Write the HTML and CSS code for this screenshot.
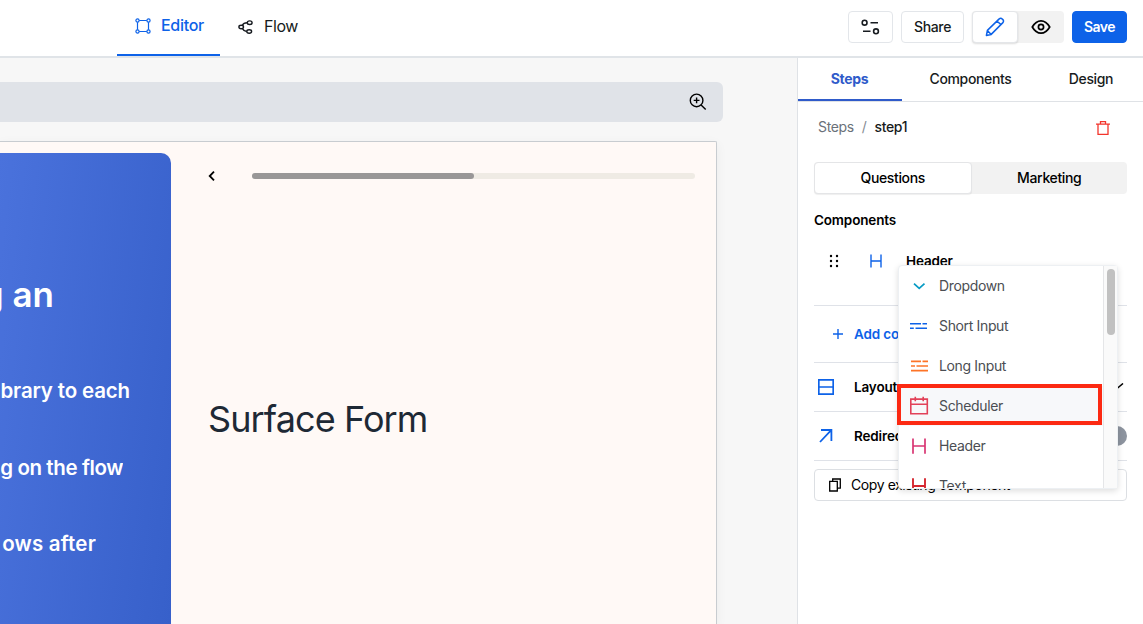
FILE: index.html
```html
<!DOCTYPE html>
<html lang="en">
<head>
<meta charset="utf-8">
<title>Form editor</title>
<link rel="stylesheet" href="styles.css">
</head>
<body>
<header class="topbar">
  <nav class="modes">
    <a class="mode mode-active">
      <svg width="16" height="16" viewBox="0 0 16 16" fill="none" stroke="currentColor" stroke-width="1.2"><path d="M4.2 2.5h7.6M4.2 13.5h7.6M2.5 4.2v7.6M13.5 4.2v7.6"/><circle cx="2.5" cy="2.5" r="1.6"/><circle cx="13.5" cy="2.5" r="1.6"/><circle cx="2.5" cy="13.5" r="1.6"/><circle cx="13.5" cy="13.5" r="1.6"/></svg>
      <span>Editor</span>
    </a>
    <a class="mode">
      <svg width="16" height="16" viewBox="0 0 16 16" fill="none" stroke="currentColor" stroke-width="1.4"><ellipse cx="3.2" cy="8" rx="2.3" ry="1.7"/><ellipse cx="11.7" cy="3.7" rx="2.4" ry="1.8"/><ellipse cx="11.2" cy="12.5" rx="2.4" ry="1.7"/><path d="M4.3 6.3Q5.5 3.8 9.2 3.7M4.5 9.6Q5.8 12.3 8.7 12.5"/></svg>
      <span>Flow</span>
    </a>
  </nav>
  <div class="actions">
    <button class="btn btn-settings"><svg width="20" height="18" viewBox="0 0 20 18" fill="none" stroke="currentColor" stroke-width="1.6"><circle cx="3.6" cy="4.7" r="2.4"/><path d="M9.5 4.7h7.5M2 13.3h7.5"/><circle cx="15" cy="13.3" r="2.4"/></svg></button>
    <button class="btn btn-share">Share</button>
    <div class="view-toggle">
      <button class="view view-active"><svg width="20" height="20" viewBox="0 0 20 20" fill="none" stroke="currentColor" stroke-width="1.5" stroke-linejoin="round"><path d="M1.4 18.4l1-5L14.2 1.9a2.1 2.1 0 0 1 3 0l.7.7a2.1 2.1 0 0 1 0 3L6.2 17.4zM12.1 4l3.8 3.8M2.4 13.4l3.8 4"/></svg></button>
      <button class="view"><svg width="20" height="16" viewBox="0 0 20 16" fill="none" stroke="currentColor" stroke-width="1.7"><path d="M1.3 8Q4.8 1.8 10 1.8T18.7 8Q15.2 14.2 10 14.2T1.3 8z"/><circle cx="10" cy="8" r="2.6"/></svg></button>
    </div>
    <button class="btn btn-save">Save</button>
  </div>
</header>
<div class="workspace">
  <main class="stage">
    <div class="zoombar"><svg width="18" height="18" viewBox="0 0 18 18" fill="none" stroke="currentColor" stroke-width="1.4"><circle cx="7.6" cy="7.4" r="6.3"/><path d="M4.7 7.4h5.8M7.6 4.5v5.8M12.1 12l4.6 4.6"/></svg></div>
    <div class="preview">
      <section class="promo">
        <h2 class="promo-line promo-title">g an</h2>
        <p class="promo-line promo-a">brary to each</p>
        <p class="promo-line promo-b">g on the flow</p>
        <p class="promo-line promo-c">ows after</p>
      </section>
      <section class="form">
        <div class="form-nav">
          <svg width="10" height="12" viewBox="0 0 10 12" fill="none" stroke="currentColor" stroke-width="1.8"><path d="M7 1.6L2.7 6 7 10.4"/></svg>
          <div class="progress"><div class="progress-fill"></div></div>
        </div>
        <h1 class="form-title">Surface Form</h1>
      </section>
    </div>
  </main>
  <aside class="sidebar">
    <nav class="tabs"><a class="tab tab-active">Steps</a><a class="tab tab-mid">Components</a><a class="tab tab-last">Design</a></nav>
    <div class="panel">
      <div class="crumbs">
        <span class="crumb">Steps</span><span class="slash">/</span><span class="current">step1</span>
        <svg class="trash" width="14" height="14" viewBox="0 0 14 14" fill="none" stroke="currentColor" stroke-width="1.3"><path d="M0 3.2h14M4.5 3V.7h5V3M2 3.2v10.1h10V3.2"/></svg>
      </div>
      <div class="segment"><button class="seg seg-active">Questions</button><button class="seg">Marketing</button></div>
      <h3 class="heading">Components</h3>
      <div class="row component-row">
        <svg width="10" height="14" viewBox="0 0 10 14" fill="currentColor"><circle cx="2" cy="2" r="1.2"/><circle cx="8" cy="2" r="1.2"/><circle cx="2" cy="7" r="1.2"/><circle cx="8" cy="7" r="1.2"/><circle cx="2" cy="12" r="1.2"/><circle cx="8" cy="12" r="1.2"/></svg>
        <svg class="blue" width="12" height="14" viewBox="0 0 12 14" fill="none" stroke="currentColor" stroke-width="1.4"><path d="M1 .5v13M11 .5v13M1 7h10"/></svg>
        <span class="label">Header</span>
      </div>
      <div class="row add-row blue">
        <svg width="10" height="10" viewBox="0 0 10 10" fill="none" stroke="currentColor" stroke-width="1.4"><path d="M5 0v10M0 5h10"/></svg>
        <span class="label">Add component</span>
      </div>
      <div class="row option-row">
        <svg class="blue" width="16" height="16" viewBox="0 0 16 16" fill="none" stroke="currentColor" stroke-width="1.7"><path d="M.8.8h14.4v14.4H.8zM.8 8h14.4"/></svg>
        <span class="label">Layout</span>
        <svg class="row-end check" width="12" height="8" viewBox="0 0 12 8" fill="none" stroke="currentColor" stroke-width="1.5"><path d="M1 1.5l4 4 6-5"/></svg>
      </div>
      <div class="row option-row">
        <svg class="blue" width="16" height="14" viewBox="0 0 16 14" fill="none" stroke="currentColor" stroke-width="1.8"><path d="M3 1h10.4v11M13.2 1.2L2 13"/></svg>
        <span class="label">Redirect</span>
        <span class="switch row-end"></span>
      </div>
      <button class="copy"><svg width="12" height="14" viewBox="0 0 12 14" fill="none" stroke="currentColor" stroke-width="1.3"><path d="M3.7 3V1h7.6v9.2H8.7M.7 3.4h7.6V13H.7z"/></svg><span>Copy existing component</span></button>
    </div>
    <div class="menu">
      <ul class="menu-list">
        <li class="item"><svg class="teal" width="20" height="20" viewBox="0 0 20 20" fill="none" stroke="currentColor" stroke-width="1.7"><path d="M5 7.6l5.2 4.8 5.3-4.8"/></svg><span>Dropdown</span></li>
        <li class="item"><svg class="blue" width="20" height="20" viewBox="0 0 20 20" fill="none" stroke="currentColor" stroke-width="1.6"><path d="M1 7.7h11M13.5 7.7h4.5M1 12.3h3.8M6.5 12.3h11.5"/></svg><span>Short Input</span></li>
        <li class="item"><svg class="orange" width="20" height="20" viewBox="0 0 20 20" fill="none" stroke="currentColor" stroke-width="1.6"><path d="M2 5.4h10M13.5 5.4H19M2 10h4M7.5 10H19M2 14.6h17"/></svg><span>Long Input</span></li>
        <li class="item item-active"><svg class="crimson" width="20" height="20" viewBox="0 0 20 20" fill="none" stroke="currentColor" stroke-width="1.6"><path d="M1.8 3.1h16.5v14.6H1.8zM1.8 8.2h16.5M6.3.7v4.5M14.2.7v4.5"/></svg><span>Scheduler</span></li>
        <li class="item"><svg class="pink" width="20" height="20" viewBox="0 0 20 20" fill="none" stroke="currentColor" stroke-width="1.7"><path d="M4 2.5v15.3M16 2.5v15.3M4 10h12"/></svg><span>Header</span></li>
        <li class="item"><svg class="red" width="20" height="20" viewBox="0 0 20 20" fill="none" stroke="currentColor" stroke-width="1.9"><path d="M4 2.2v15M16 2.2v15M4 10h12"/></svg><span>Text</span></li>
      </ul>
      <div class="track"><div class="thumb"></div></div>
      <div class="highlight"></div>
    </div>
  </aside>
</div>
</body>
</html>
```
FILE: styles.css
```css
* { box-sizing: border-box; }
body { margin: 0; width: 1143px; height: 624px; overflow: hidden; display: flex; flex-direction: column; background: #fff; color: #171b20; font-family: Inter, "Liberation Sans", sans-serif; font-size: 14px; letter-spacing: -.35px; }
button { font: inherit; letter-spacing: inherit; color: inherit; padding: 0; margin: 0; border: 0; background: none; display: flex; align-items: center; justify-content: center; }
h1, h2, h3, p, ul { margin: 0; padding: 0; list-style: none; }
svg { display: block; flex: none; }
.blue { color: #0d62e8; }
.topbar { height: 58px; flex: none; display: flex; justify-content: space-between; border-bottom: 2px solid #e0e4e8; padding: 0 16px 0 117px; }
.modes { display: flex; height: 56px; }
.mode { display: flex; align-items: center; gap: 10px; padding: 0 17px 2px 18px; font-size: 16px; letter-spacing: -.45px; }
.mode:last-child { padding-bottom: 4px; }
.mode:last-child svg { margin-top: 2px; }
.mode-active { width: 103px; color: #0d62e8; font-weight: 500; border-bottom: 2px solid #0d62e8; }
.mode-active span { margin-top: -2px; letter-spacing: -.3px; }
.actions { display: flex; gap: 8px; padding-top: 11px; }
.btn { height: 32px; border: 1px solid #e3e6ea; border-radius: 4px; font-weight: 500; padding-bottom: 1px; }
.btn-settings { width: 45px; padding: 0; }
.btn-share { width: 63px; }
.btn-save { width: 55px; background: #0d62e8; border-color: #0d62e8; color: #fff; font-weight: 600; letter-spacing: -.5px; }
.view-toggle { width: 92px; height: 32px; display: flex; background: #f2f2f2; border-radius: 4px; }
.view { width: 46px; color: #000; }
.view-active { background: #fff; border: 1px solid #e4e6e9; border-radius: 4px; color: #0d62e8; box-shadow: 0 1px 2px #0002; }
.workspace { flex: 1; min-height: 0; display: flex; }
.stage { width: 797px; background: #f7f7f7; padding-top: 24px; display: flex; flex-direction: column; overflow: hidden; }
.zoombar { width: 723px; height: 40px; flex: none; border-radius: 0 6px 6px 0; background: #e0e3e8; display: flex; align-items: center; justify-content: flex-end; padding-right: 16px; color: #000; }
.preview { width: 717px; flex: 1; margin-top: 19px; border: solid #c8ccd0; border-width: 1px 1px 0 0; border-radius: 0 2px 0 0; background: #fff9f6; box-shadow: 0 3px 12px #0000000d; display: flex; padding-top: 11px; }
.promo { width: 171px; flex: none; overflow: hidden; border-radius: 0 10px 0 0; background: linear-gradient(97deg, #4a72dc, #3760ca); color: #fff; display: flex; flex-direction: column; }
.promo-line { display: flex; justify-content: flex-end; white-space: nowrap; height: 30px; line-height: 30px; flex: none; font-size: 20.5px; font-weight: 600; overflow: hidden; letter-spacing: -.15px; }
.promo-title { width: 54px; height: 50px; line-height: 50px; margin-top: 116px; font-size: 35px; font-weight: 600; letter-spacing: 0; }
.promo-a { width: 130px; margin-top: 57px; }
.promo-b { width: 123px; margin-top: 47px; letter-spacing: -.4px; }
.promo-c { width: 96px; margin-top: 46px; letter-spacing: .2px; }
.form { flex: 1; padding: 17px 21px 0 36px; color: #000; }
.form-nav { display: flex; align-items: center; height: 12px; gap: 35px; }
.progress { flex: 1; height: 6px; border-radius: 3px; background: #efebe4; }
.progress-fill { width: 50%; height: 6px; border-radius: 3px; background: #999797; }
.form-title { margin-top: 212px; padding-left: 1px; font-size: 36px; line-height: 50px; font-weight: 400; color: #1e2935; white-space: nowrap; letter-spacing: -.9px; }
.sidebar { flex: 1; position: relative; border-left: 1px solid #dfe2e6; background: #fff; color: #000; }
.tabs { height: 44px; display: flex; border-bottom: 1px solid #dfe2e6; font-weight: 500; }
.tab { height: 43px; display: flex; align-items: center; justify-content: center; color: #171b20; padding-bottom: 2px; }
.tab-active { width: 104px; color: #2f5bca; font-weight: 700; border-bottom: 2px solid #2f5bca; padding: 0 1px 0 0; }
.tab-mid { width: 137px; }
.tab-last { width: 104px; }
.panel { padding: 0 16px; }
.crumbs { display: flex; align-items: center; height: 50px; padding: 0 17px 0 4px; }
.crumbs span { margin-top: -1px; }
.crumb { color: #6a7179; }
.crumbs .slash { margin: -1px 8px 0; color: #858b92; }
.current { font-weight: 500; color: #171b20; }
.trash { margin-left: auto; margin-top: 2px; color: #f3352c; }
.segment { height: 32px; margin-top: 10px; background: #f2f2f2; border-radius: 4px; display: flex; }
.seg { flex: 1; font-weight: 500; padding-bottom: 1px; }
.seg-active { background: #fff; border: 1px solid #e4e5e7; border-radius: 4px; box-shadow: 0 1px 1px #0001; }
.heading { height: 24px; line-height: 24px; margin-top: 14px; font-size: 13.5px; letter-spacing: -.15px; font-weight: 600; }
.row { display: flex; align-items: center; border-bottom: 1px solid #dfe2e8; white-space: nowrap; }
.label { font-weight: 600; font-size: 13.5px; letter-spacing: -.15px; }
.component-row { height: 74px; padding: 0 0 15px 15px; gap: 31px; }
.component-row .label { margin-left: -7px; }
.add-row { height: 57px; padding-left: 19px; gap: 11px; }
.option-row { height: 49px; padding-left: 4px; gap: 20px; }
.row-end { margin-left: auto; }
.check { margin-right: 3px; }
.switch { width: 32px; height: 20px; border-radius: 10px; background: #8d949f; }
.copy { width: 313px; height: 32px; margin-top: 8px; border: 1px solid #dcdfe3; border-radius: 4px; justify-content: flex-start; padding-left: 14px; gap: 10px; letter-spacing: -.42px; padding-bottom: 1px; }
.menu { position: absolute; left: 100px; top: 207px; width: 220px; height: 224px; display: flex; background: #fff; border: 1px solid #edf0f3; border-radius: 4px; box-shadow: 0 2px 6px #0002; }
.menu-list { width: 204px; flex: none; height: 222px; overflow: hidden; border-radius: 4px 0 0 4px; }
.item { height: 40px; display: flex; align-items: center; gap: 10px; padding-left: 10px; color: #4b4e53; }
.item span { margin-top: -1px; }
.item-active { background: #f7f8fa; }
.track { width: 14px; background: #fafafa; border-left: 1px solid #e5e6e8; padding: 3px 0 0 3px; }
.thumb { width: 8px; height: 66px; border-radius: 4px; background: #c1c1c1; }
.highlight { position: absolute; left: -2px; top: 118px; width: 205px; height: 41px; border: 4px solid #fc2912; }
.teal { color: #079bc4; }
.orange { color: #fd7427; }
.crimson { color: #e24158; }
.pink { color: #d93573; }
.red { color: #d52730; }
```
